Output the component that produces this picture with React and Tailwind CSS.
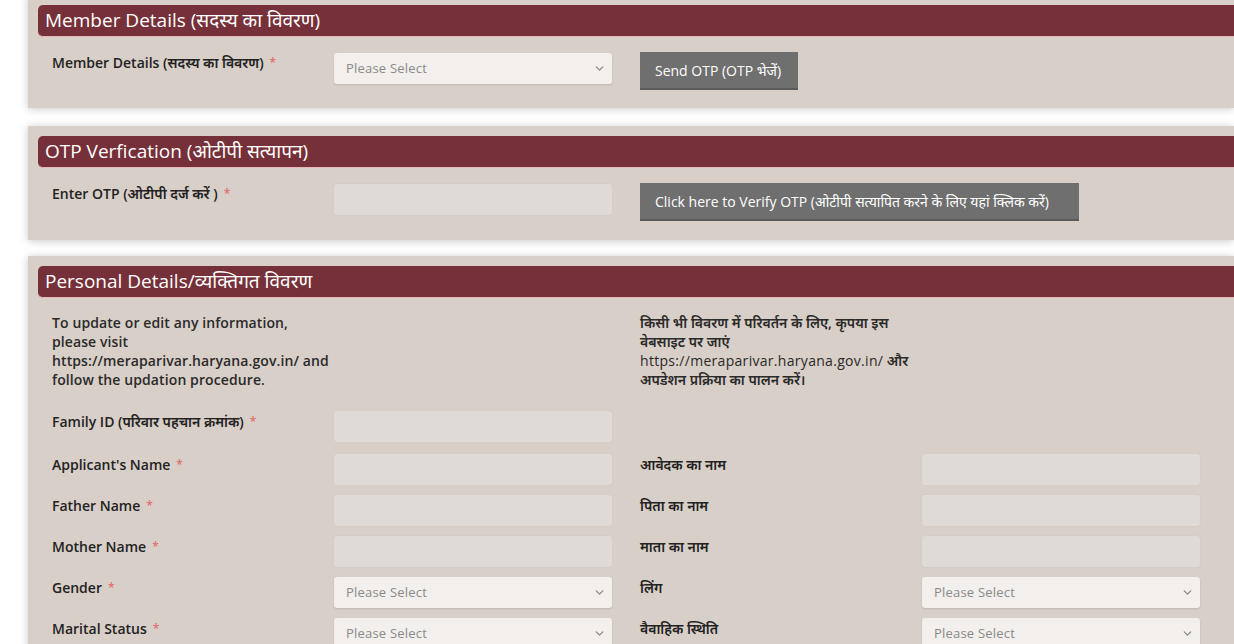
import { ChevronDown } from 'lucide-react';

const font = "font-['Open_Sans','Noto_Sans','Noto_Sans_CJK_SC',sans-serif]";

const Star = () => <span className="ml-[6px] text-[#e26d6d] text-[12px] align-top">*</span>;

const Label = ({ text, required }) => (
  <div className="text-[14px] font-semibold text-[#222] leading-[20px] pt-[1px]">
    {text}
    {required && <Star />}
  </div>
);

const TextInput = () => (
  <div className="w-[278px] h-[31px] bg-[#dfdad6] rounded-[3px] shadow-[0_0_2px_rgba(0,0,0,0.06)]" />
);

const Select = () => (
  <div className="w-[278px] h-[31px] bg-[#f2efec] rounded-[3px] shadow-[0_1px_2px_rgba(0,0,0,0.12)] flex items-center justify-between pl-[12px] pr-[6px] text-[13px] text-[#8a8a8a]">
    <span className="tracking-[0.2px]">Please Select</span>
    <ChevronDown size={13} strokeWidth={2.5} className="text-[#8a8a8a]" />
  </div>
);

const Button = ({ children, wide }) => (
  <button className={`h-[38px] px-[15px] bg-[#6f6f6f] text-white text-[14px] border-b-2 border-[#5b5b5b] text-left ${wide ? 'w-[439px]' : 'w-[158px]'}`}>
    {children}
  </button>
);

const Panel = ({ title, children, className = '' }) => (
  <div className={`bg-[#d8cfc8] pt-[10px] pl-[10px] shadow-[0_1px_8px_rgba(0,0,0,0.22)] ${className}`}>
    <div className="h-[32px] bg-[#763039] rounded-l-[5px] border-b border-[#e8b9b9] flex items-center pl-[7px] text-white text-[19px]">
      {title}
    </div>
    <div className="pl-[14px]">{children}</div>
  </div>
);

const Row = ({ children, className = '' }) => (
  <div className={`grid grid-cols-[282px_306px_282px_278px] items-start ${className}`}>{children}</div>
);

const personalRows = [
  { en: "Applicant's Name", hi: 'आवेदक का नाम', type: 'text' },
  { en: 'Father Name', hi: 'पिता का नाम', type: 'text' },
  { en: 'Mother Name', hi: 'माता का नाम', type: 'text' },
  { en: 'Gender', hi: 'लिंग', type: 'select' },
  { en: 'Marital Status', hi: 'वैवाहिक स्थिति', type: 'select' },
];

export default function App() {
  return (
    <div className={`min-h-screen bg-white pl-[28px] overflow-hidden ${font}`}>
      <Panel title="Member Details (सदस्य का विवरण)" className="-mt-[5px]">
        <Row className="pt-[15px] pb-[18px]">
          <Label text="Member Details (सदस्य का विवरण)" required />
          <div className="pt-[1px]"><Select /></div>
          <Button>Send OTP (OTP भेजें)</Button>
        </Row>
      </Panel>

      <Panel title="OTP Verfication (ओटीपी सत्यापन)" className="mt-[18px]">
        <Row className="pt-[15px] pb-[19px]">
          <Label text="Enter OTP (ओटीपी दर्ज करें )" required />
          <div className="pt-[1px]"><TextInput /></div>
          <div className="col-span-2"><Button wide>Click here to Verify OTP (ओटीपी सत्यापित करने के लिए यहां क्लिक करें)</Button></div>
        </Row>
      </Panel>

      <Panel title="Personal Details/व्यक्तिगत विवरण" className="mt-[16px]">
        <Row className="pt-[15px]">
          <p className="text-[14px] leading-[19px] text-[#2a2a2a] font-semibold tracking-[0.1px] whitespace-nowrap">
            To update or edit any information,<br />
            please visit<br />
            https://meraparivar.haryana.gov.in/ and<br />
            follow the updation procedure.
          </p>
          <div />
          <p className="text-[14px] leading-[19px] text-[#2a2a2a] font-semibold whitespace-nowrap">
            किसी भी विवरण में परिवर्तन के लिए, कृपया इस<br />
            वेबसाइट पर जाएं<br />
            <span className="font-normal tracking-[0.3px]">https://meraparivar.haryana.gov.in/</span> और<br />
            अपडेशन प्रक्रिया का पालन करें।
          </p>
        </Row>
        <Row className="pt-[22px]">
          <Label text="Family ID (परिवार पहचान क्रमांक)" required />
          <TextInput />
        </Row>
        <div className="flex flex-col gap-[10px] pt-[12px] pb-[20px]">
          {personalRows.map((r) => (
            <Row key={r.en}>
              <Label text={r.en} required />
              {r.type === 'select' ? <Select /> : <TextInput />}
              <Label text={r.hi} />
              {r.type === 'select' ? <Select /> : <TextInput />}
            </Row>
          ))}
        </div>
      </Panel>
    </div>
  );
}
